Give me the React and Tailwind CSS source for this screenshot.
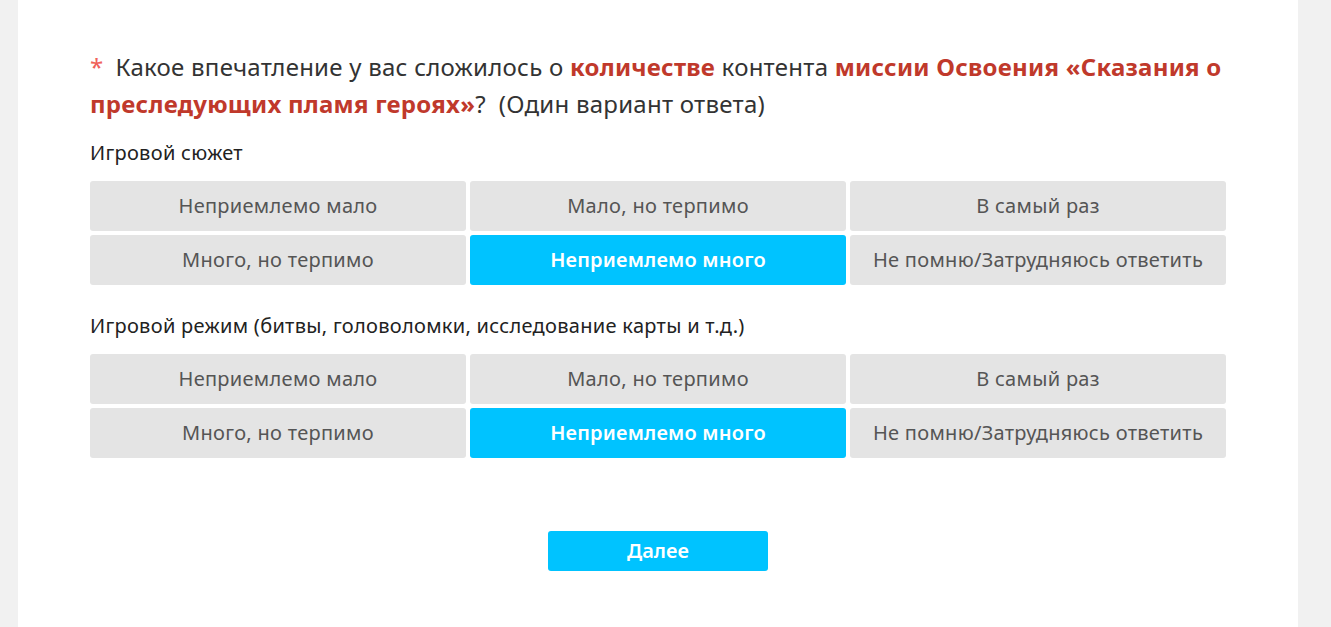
import React, { useState } from "react";

const OPTIONS = [
  "Неприемлемо мало",
  "Мало, но терпимо",
  "В самый раз",
  "Много, но терпимо",
  "Неприемлемо много",
  "Не помню/Затрудняюсь ответить",
];

const SECTIONS = [
  { id: "story", title: "Игровой сюжет" },
  { id: "mode", title: "Игровой режим (битвы, головоломки, исследование карты и т.д.)" },
];

const OptionGrid = ({ value, onChange }) => (
  <div className="grid grid-cols-3 gap-1">
    {OPTIONS.map((opt, i) => {
      const active = value === i;
      return (
        <button
          key={opt}
          onClick={() => onChange(i)}
          className={
            active
              ? "h-[50px] rounded-[3px] bg-[#00c3ff] text-white text-[20px] tracking-[0.2px] font-semibold"
              : "h-[50px] rounded-[3px] bg-[#e4e4e4] text-[#555] text-[20px] tracking-[0.3px]"
          }
        >
          {opt}
        </button>
      );
    })}
  </div>
);

const App = () => {
  const [answers, setAnswers] = useState({ story: 4, mode: 4 });

  return (
    <div
      className="min-h-screen bg-[#f1f1f1] px-[18px] pr-[33px]"
      style={{ fontFamily: '"Segoe UI", "Noto Sans", "Open Sans", sans-serif' }}
    >
      <div className="bg-white min-h-[627px] pl-[72px] pr-[72px] pt-[48px]">
        <div className="text-[24px] tracking-[0.25px] leading-[37px] text-[#333]">
          <div className="whitespace-nowrap">
            <span className="text-[#f0625a] mr-3">*</span>
            Какое впечатление у вас сложилось о{" "}
            <b className="text-[#c0392b]">количестве</b> контента{" "}
            <b className="text-[#c0392b]">миссии Освоения «Сказания о</b>
          </div>
          <div>
            <b className="text-[#c0392b]">преследующих пламя героях»</b>?&nbsp; (Один вариант ответа)
          </div>
        </div>

        {SECTIONS.map((s, idx) => (
          <div key={s.id} className={idx > 0 ? "pt-[10px]" : ""}>
            <div className="text-[20px] tracking-[0.3px] text-[#222] mt-[18px] mb-[15px] leading-[26px]">
              {s.title}
            </div>
            <OptionGrid
              value={answers[s.id]}
              onChange={(v) => setAnswers({ ...answers, [s.id]: v })}
            />
          </div>
        ))}

        <div className="flex justify-center mt-[73px]">
          <button className="w-[220px] h-[40px] rounded-[3px] bg-[#00c3ff] text-white text-[20px] font-semibold">
            Далее
          </button>
        </div>
      </div>
    </div>
  );
};

export default App;
